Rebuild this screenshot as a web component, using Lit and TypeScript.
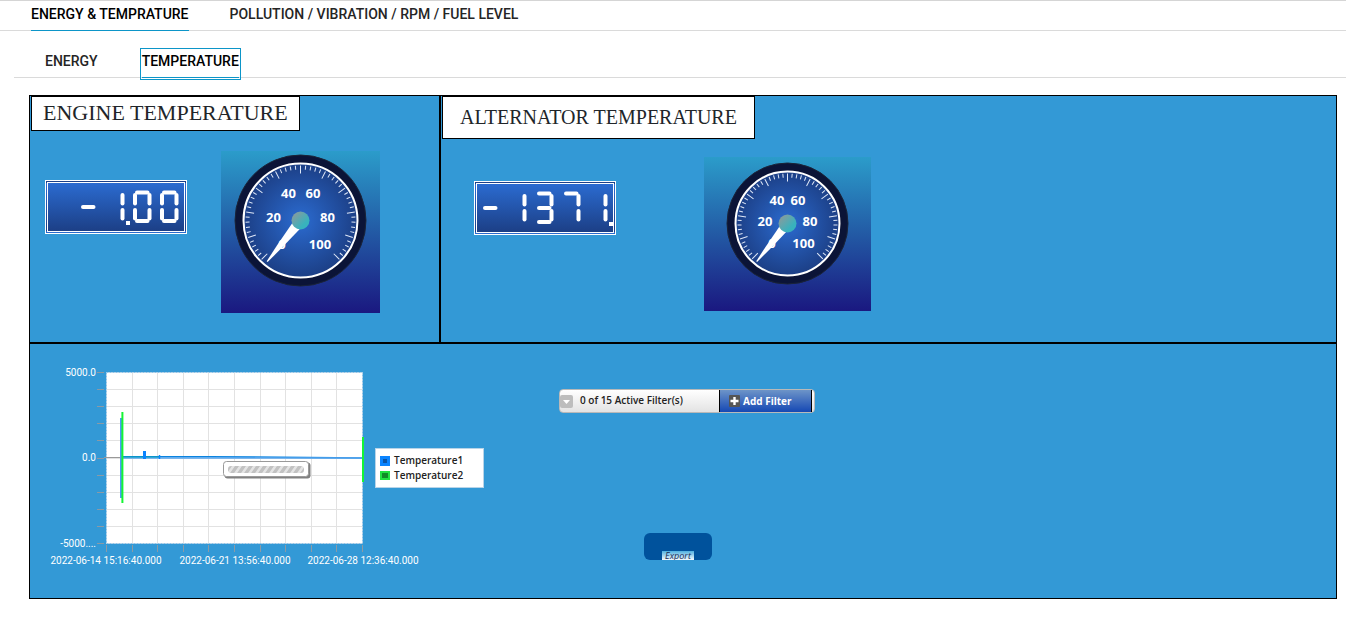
import { LitElement, html, css, svg } from "lit";
import { customElement, property, state } from "lit/decorators.js";

@customElement("lcd-display")
class LcdDisplay extends LitElement {
  @property() value = "";

  static styles = css`
    :host { display: block; flex: none; }
    .screen {
      display: block;
      border: 3px double #fff;
      background: linear-gradient(#2b6bd0, #1c3f86);
    }
    .seg { stroke: #fff; stroke-width: 4; stroke-linecap: round; fill: none; }
    .dot { fill: #fff; }
  `;

  // Segment order: a top, b upper right, c lower right, d bottom, e lower left, f upper left, g middle
  private static segments: Record<string, string> = {
    "0": "abcdef", "1": "bc", "2": "abged", "3": "abgcd", "4": "fgbc",
    "5": "afgcd", "6": "afgcde", "7": "abc", "8": "abcdefg", "9": "abcdfg", "-": "g", " ": "",
  };

  private line(name: string, right: number) {
    const left = right - 14.5;
    const paths: Record<string, string> = {
      a: `M${left + 2} 9.5H${right - 2}`,
      b: `M${right} 12V20.5`,
      c: `M${right} 27V35.5`,
      d: `M${left + 2} 38H${right - 2}`,
      e: `M${left} 27V35.5`,
      f: `M${left} 12V20.5`,
      g: `M${left + 2} 24H${right - 2}`,
    };
    return svg`<path class="seg" d=${paths[name]} />`;
  }

  render() {
    const cells: { ch: string; dot: boolean }[] = [];
    for (const ch of this.value) {
      if (ch === ".") cells[cells.length - 1].dot = true;
      else cells.push({ ch, dot: false });
    }
    return html`
      <svg class="screen" width="136" height="48" viewBox="0 0 136 48" role="img" aria-label=${this.value}>
        ${cells.map((cell, i) => {
          const right = 128.5 - (cells.length - 1 - i) * 27;
          return svg`
            ${[...LcdDisplay.segments[cell.ch]].map((s) => this.line(s, right))}
            ${cell.dot ? svg`<rect class="dot" x=${right + 3.5} y="38" width="4" height="4" />` : ""}
          `;
        })}
      </svg>
    `;
  }
}

interface GaugeShape {
  width: number;
  height: number;
  cx: number;
  cy: number;
  r: number;
  labels: [string, number, number][];
}

@customElement("dial-gauge")
class DialGauge extends LitElement {
  @property({ attribute: false }) shape!: GaugeShape;

  static styles = css`
    :host { display: block; flex: none; }
    .dial { display: block; background: linear-gradient(#2b9cca, #1a1880); }
    .num {
      font: 700 13px "Open Sans", "Noto Sans", sans-serif;
      fill: #fff;
      text-anchor: middle;
    }
    .tick { stroke: #dfe8f8; stroke-width: 1; }
  `;

  render() {
    const { width, height, cx, cy, r, labels } = this.shape;
    const inner = r - 9;
    const ticks = Array.from({ length: 51 }, (_, i) => i);
    return html`
      <svg class="dial" width=${width} height=${height} viewBox="0 0 ${width} ${height}" role="img" aria-label="Temperature dial">
        <defs>
          <radialGradient id="face">
            <stop offset="0" stop-color="#2b6bd0" />
            <stop offset="1" stop-color="#1c3f86" />
          </radialGradient>
          <linearGradient id="hub" x1="0" y1="0" x2="1" y2="1">
            <stop offset="0.1" stop-color="#8a9a9c" />
            <stop offset="0.7" stop-color="#38b2bd" />
          </linearGradient>
        </defs>
        <circle cx=${cx} cy=${cy} r=${r - 0.5} fill="#0b1437" stroke="#1b2438" />
        <circle cx=${cx} cy=${cy} r=${inner} fill="url(#face)" stroke="#fff" stroke-width="2" />
        ${ticks.map((i) => {
          const major = i % 5 === 0;
          return svg`<line class="tick" x1=${cx} x2=${cx} y1=${cy - inner + 2} y2=${cy - inner + (major ? 10 : 6)}
            transform="rotate(${-135 + i * 5.4} ${cx} ${cy})" />`;
        })}
        ${labels.map(([text, x, y]) => svg`<text class="num" x=${x} y=${y}>${text}</text>`)}
        <path
          fill="#fff"
          transform="translate(${cx} ${cy}) rotate(39) scale(${r / 66})"
          d="M-4.8 7L-2.6 34L-0.6 53H0.6L2.6 34L4.8 7Z"
        />
        <circle cx=${cx} cy=${cy} r="9" fill="url(#hub)" />
      </svg>
    `;
  }
}

@customElement("trend-chart")
class TrendChart extends LitElement {
  static styles = css`
    :host { display: block; flex: none; }
    .plot { display: block; overflow: visible; }
    .label { font: 10px Roboto, "Open Sans", sans-serif; fill: #fff; }
    .end { text-anchor: end; }
    .mid { text-anchor: middle; }
    .grid { stroke: #e2e2e2; stroke-width: 1; }
    .mark { stroke: #8a9aa6; stroke-width: 1; }
  `;

  render() {
    const steps = Array.from({ length: 11 }, (_, i) => i);
    const gx = (i: number) => 56.5 + Math.round(i * 25.6);
    const gy = (i: number) => 8.5 + Math.round(i * 17.1);
    return html`
      <svg class="plot" width="313" height="204" viewBox="0 0 313 204" role="img" aria-label="Temperature history">
        <defs>
          <pattern id="stripes" width="7" height="7" patternUnits="userSpaceOnUse" patternTransform="translate(178 102) skewX(-35)">
            <rect width="7" height="7" fill="#e4e4e4" />
            <rect width="4" height="7" fill="#c2c2c2" />
          </pattern>
        </defs>
        <rect x="56" y="8" width="257" height="171" fill="#fff" />
        ${steps.map((i) => svg`
          <path class="grid" d="M${gx(i)} 8V179M56 ${gy(i)}H312" />
          <path class="mark" d="M${gx(i)} 181V188M47 ${gy(i)}H54" />
        `)}
        <rect x="56.5" y="8.5" width="256" height="171" fill="none" stroke="#8cc4ec" stroke-dasharray="2 1" />
        <path d="M54 93.5H72" stroke="#999" />
        <path d="M71 54V134" stroke="#4a9cf5" stroke-width="2" />
        <path d="M73 92.7H160L313 94" stroke="#0a84e0" stroke-width="1.6" fill="none" />
        <path d="M73 94H313" stroke="#5aa6ee" stroke-width="1.4" />
        <path d="M73 93H110" stroke="#08a3b8" stroke-width="1" />
        <path d="M94.5 87V95" stroke="#0b84ff" stroke-width="3" />
        <path d="M109.5 91V95" stroke="#0b84ff" stroke-width="1.5" />
        <path d="M72.4 48V139M313 73V118" stroke="#14f534" stroke-width="2" />
        <rect x="174.5" y="98.5" width="86" height="16" rx="3" fill="#808080" />
        <rect x="173.5" y="97.5" width="85" height="15" rx="3" fill="#fff" stroke="#999" />
        <rect x="178" y="102" width="76" height="7" rx="3" fill="url(#stripes)" />
        <text class="label end" x="46" y="12">5000.0</text>
        <text class="label end" x="46" y="97">0.0</text>
        <text class="label end" x="46" y="183">-5000....</text>
        <text class="label mid" x="56" y="200">2022-06-14 15:16:40.000</text>
        <text class="label mid" x="185" y="200">2022-06-21 13:56:40.000</text>
        <text class="label mid" x="313" y="200">2022-06-28 12:36:40.000</text>
      </svg>
    `;
  }
}

@customElement("app-root")
class AppRoot extends LitElement {
  @state() private section = 0;
  @state() private tab = 1;

  private engine: GaugeShape = {
    width: 159, height: 162, cx: 79.5, cy: 69.5, r: 66,
    labels: [["0", 61, 98], ["20", 52.5, 71], ["40", 67.5, 47], ["60", 92, 47], ["80", 106.5, 71], ["100", 99, 98]],
  };

  private alternator: GaugeShape = {
    width: 167, height: 154, cx: 83.5, cy: 66.5, r: 61,
    labels: [["0", 68, 91], ["20", 61, 69], ["40", 73, 48], ["60", 94, 48], ["80", 106, 69], ["100", 99.5, 91]],
  };

  static styles = css`
    :host { display: block; background: #fff; font-family: Roboto, "Open Sans", sans-serif; }
    button { font: inherit; color: inherit; padding: 0; margin: 0; border: 0; background: none; cursor: pointer; }
    .tabs {
      display: flex;
      border-bottom: 1px solid #dadada;
      font-size: 14px;
      font-weight: 500;
      line-height: 20px;
    }
    .tab { color: #252525; white-space: nowrap; border-bottom: 1px solid transparent; margin-bottom: -1px; }
    .tab.on { color: #000; border-bottom-color: #0c95c8; }
    .primary { border-top: 1px solid #d5d5d5; padding-left: 31px; gap: 41px; }
    .primary .tab { padding: 3px 0 6px; }
    .secondary { margin: 19px 0 0 14px; padding-left: 31px; gap: 44px; }
    .secondary .tab { padding: 1px 0 6px; }
    .secondary .tab.on { outline: 1px solid #0c95c8; outline-offset: 1px; }
    .board {
      display: grid;
      grid-template-columns: 411px 1fr;
      grid-template-rows: 248px 256px;
      margin: 17px 9px 0 29px;
    }
    .panel { background: #3399d6; border: 1px solid #000; min-width: 0; }
    .title {
      width: fit-content;
      margin: 0 0 0 1px;
      background: #fff;
      border: 1px solid #000;
      color: #212529;
      font-family: "Liberation Serif", serif;
      font-weight: 400;
      white-space: nowrap;
    }
    .engine .title { font-size: 22px; line-height: 31px; padding: 0 11px 2px; }
    .alternator .title { font-size: 20px; line-height: 41px; padding: 0 17px; }
    .meters { display: flex; align-items: flex-start; }
    .engine .meters { padding: 20px 0 0 15px; gap: 34px; }
    .alternator .meters { padding: 18px 0 0 33px; gap: 88px; }
    .engine lcd-display { margin-top: 29px; }
    .alternator lcd-display { margin-top: 24px; }
    .history { grid-column: 1 / -1; display: flex; align-items: flex-start; padding: 20px 0 0 20px; }
    .legend {
      list-style: none;
      margin: 84px 0 0 12px;
      padding: 4px;
      width: 99px;
      background: #fff;
      border: 1px solid #b8d4e8;
      font: 600 10px/15px "Open Sans", sans-serif;
      color: #222;
    }
    .legend li { display: flex; align-items: center; gap: 4px; height: 15px; }
    .swatch { width: 4px; height: 4px; border: 3px solid #0b84ff; background: #0b55a8; }
    .swatch.two { width: 6px; height: 5px; border: 2px solid #22e040; background: #128a28; }
    .controls { margin: 25px 0 0 75px; }
    .filters {
      display: flex;
      align-items: stretch;
      height: 22px;
      width: 254px;
      border: 1px solid #b9b9b9;
      border-radius: 4px;
      background: linear-gradient(#fff, #e3e3e3);
      font: 600 10px/21px "Open Sans", sans-serif;
      color: #222;
    }
    .toggle { display: flex; align-items: center; }
    .count { flex: 1; padding-left: 6px; }
    .add {
      display: flex;
      align-items: center;
      gap: 3px;
      width: 93px;
      padding-left: 9px;
      margin-right: 2px;
      border: solid #000;
      border-width: 0 1px;
      background: linear-gradient(#6d94c8, #1548b4);
      color: #fff;
      font-weight: 700;
    }
    .export {
      display: flex;
      align-items: flex-end;
      justify-content: center;
      width: 68px;
      height: 27px;
      margin: 120px 0 0 85px;
      border-radius: 6px;
      background: #00529c;
      overflow: hidden;
    }
    .export span {
      width: 32px;
      height: 9px;
      background: linear-gradient(#4fb0e0, #f4f9fd);
      color: #1c2b55;
      font: italic 9px/9px "Open Sans", sans-serif;
    }
  `;

  private tabs(names: string[], active: number, pick: (i: number) => void) {
    return names.map((name, i) => html`
      <button class="tab ${i === active ? "on" : ""}" role="tab" aria-selected=${i === active} @click=${() => pick(i)}>${name}</button>
    `);
  }

  render() {
    return html`
      <nav class="tabs primary" role="tablist">
        ${this.tabs(["ENERGY & TEMPRATURE", "POLLUTION / VIBRATION / RPM / FUEL LEVEL"], this.section, (i) => (this.section = i))}
      </nav>
      <nav class="tabs secondary" role="tablist">
        ${this.tabs(["ENERGY", "TEMPERATURE"], this.tab, (i) => (this.tab = i))}
      </nav>
      <main class="board">
        <section class="panel engine">
          <h2 class="title">ENGINE TEMPERATURE</h2>
          <div class="meters">
            <lcd-display value="-1.00"></lcd-display>
            <dial-gauge .shape=${this.engine}></dial-gauge>
          </div>
        </section>
        <section class="panel alternator">
          <h2 class="title">ALTERNATOR TEMPERATURE</h2>
          <div class="meters">
            <lcd-display value="-1371."></lcd-display>
            <dial-gauge .shape=${this.alternator}></dial-gauge>
          </div>
        </section>
        <section class="panel history">
          <trend-chart></trend-chart>
          <ul class="legend">
            <li><i class="swatch"></i>Temperature1</li>
            <li><i class="swatch two"></i>Temperature2</li>
          </ul>
          <div class="controls">
            <div class="filters">
              <button class="toggle" aria-label="Show filters">
                <svg width="14" height="15" viewBox="0 0 14 15">
                  <rect y="1" width="13" height="13" rx="2" fill="#bdbdbd" />
                  <path d="M3 6H10L6.5 10Z" fill="#fff" />
                </svg>
              </button>
              <span class="count">0 of 15 Active Filter(s)</span>
              <button class="add">
                <svg width="11" height="12" viewBox="0 0 11 12">
                  <rect width="11" height="12" rx="1" fill="#555" />
                  <path d="M5.5 2V10M1.5 6H9.5" stroke="#fff" stroke-width="2.4" />
                </svg>
                Add Filter
              </button>
            </div>
            <button class="export"><span>Export</span></button>
          </div>
        </section>
      </main>
    `;
  }
}
